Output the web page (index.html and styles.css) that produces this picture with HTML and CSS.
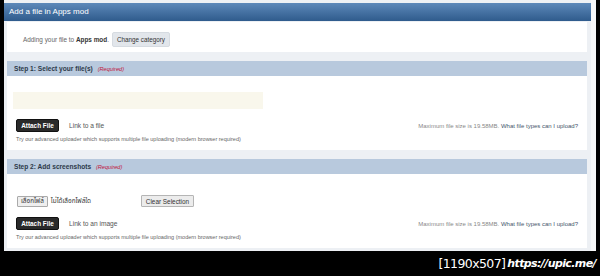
FILE: index.html
```html
<!DOCTYPE html>
<html lang="en">
<head>
  <meta charset="UTF-8">
  <title>Add a file in Apps mod</title>
  <link rel="stylesheet" href="styles.css">
</head>
<body>

  <!-- Capture d'écran : fenêtre + bord droit -->
  <div class="ecran">
    <div class="fenetre">

      <!-- Barre de titre bleue -->
      <div class="titre">Add a file in Apps mod</div>

      <div class="contenu">

        <!-- Catégorie choisie -->
        <div class="bloc categorie">
          <span class="texte-gris">Adding your file to <b>Apps mod</b>.</span>
          <button class="btn-gris">Change category</button>
        </div>

        <!-- Étape 1 -->
        <div class="bloc">
          <div class="etape-titre">Step 1: Select your file(s) <em>(Required)</em></div>
          <div class="etape-corps">
            <div class="champ"></div>
            <div class="ligne-envoi">
              <div class="gauche">
                <button class="btn-noir">Attach File</button>
                <a href="#">Link to a file</a>
              </div>
              <div class="droite">Maximum file size is 19.58MB. <a href="#">What file types can I upload?</a></div>
            </div>
            <p class="astuce">Try our advanced uploader which supports multiple file uploading (modern browser required)</p>
          </div>
        </div>

        <!-- Étape 2 -->
        <div class="bloc">
          <div class="etape-titre">Step 2: Add screenshots <em>(Required)</em></div>
          <div class="etape-corps corps-2">
            <div class="ligne-fichier">
              <button class="btn-fichier">เลือกไฟล์</button>
              <span class="aucun">ไม่ได้เลือกไฟล์ใด</span>
              <button class="btn-effacer">Clear Selection</button>
            </div>
            <div class="ligne-envoi">
              <div class="gauche">
                <button class="btn-noir">Attach File</button>
                <a href="#">Link to an image</a>
              </div>
              <div class="droite">Maximum file size is 19.58MB. <a href="#">What file types can I upload?</a></div>
            </div>
            <p class="astuce">Try our advanced uploader which supports multiple file uploading (modern browser required)</p>
          </div>
        </div>

      </div>
    </div>
    <div class="bord"></div>
  </div>

  <!-- Filigrane en bas -->
  <div class="filigrane">
    <span class="taille">[1190x507]</span><span class="site">https://upic.me/</span>
  </div>

</body>
</html>
```

FILE: styles.css
```css
/* Style de base : fond noir autour de la capture */
body {
  margin: 0;
  background: #000;
  font-family: "Liberation Sans", Arial, sans-serif;
  color: #333;
}

.ecran {
  display: flex;
  height: 251px;
  padding-left: 4px;
}

.fenetre {
  width: 587px;
  background: #edf0f4;
  border-top: 3px solid #eef1f4;
}

.bord {
  width: 5px;
  background: #f6f7f8;
}

/* Barre de titre */
.titre {
  height: 18px;
  line-height: 18px;
  padding-left: 5px;
  color: #fff;
  font-size: 8px;
  background: linear-gradient(#5d89b9, #2f5b8c);
}

.contenu {
  padding: 1px 4px 0 3px;
}

.bloc {
  background: #fff;
  margin-bottom: 9px;
}

/* Ligne de la catégorie */
.categorie {
  display: flex;
  align-items: center;
  gap: 3px;
  height: 30px;
  padding: 5px 0 0 16px;
  box-sizing: border-box;
}

.texte-gris {
  font-size: 6.4px;
  color: #666;
}

.texte-gris b {
  color: #333;
}

button {
  font-family: inherit;
  margin: 0;
  cursor: pointer;
}

.btn-gris {
  height: 15px;
  padding: 0 4px;
  font-size: 6.3px;
  color: #333;
  background: #e2e6eb;
  border: 1px solid #d6dbe1;
  border-radius: 2px;
}

/* Titre d'une étape */
.etape-titre {
  height: 15px;
  line-height: 15px;
  padding-left: 7px;
  font-size: 6.6px;
  font-weight: bold;
  color: #2d3a4a;
  background: #b8c9dd;
}

.etape-titre em {
  margin-left: 3px;
  font-size: 5.6px;
  font-weight: normal;
  color: #c0143c;
}

.etape-corps {
  padding: 16px 0 8px 0;
}

.corps-2 {
  padding-top: 21px;
}

/* Zone de dépôt crème */
.champ {
  width: 250px;
  height: 17px;
  margin-left: 6px;
  background: #f9f7ec;
}

.ligne-envoi {
  display: flex;
  justify-content: space-between;
  align-items: center;
  margin-top: 10px;
  padding: 0 9px;
}

.gauche {
  display: flex;
  align-items: center;
  gap: 10px;
}

.gauche a {
  font-size: 6.6px;
  color: #555;
  text-decoration: none;
}

.btn-noir {
  height: 13px;
  width: 43px;
  padding: 0;
  font-size: 6.4px;
  font-weight: bold;
  color: #fff;
  background: #2a2a2a;
  border: 1px solid #111;
  border-radius: 2px;
}

.droite {
  font-size: 6px;
  color: #888;
  margin-top: 1px;
}

.droite a {
  color: #45566b;
  text-decoration: none;
}

.astuce {
  margin: 4px 0 0 9px;
  font-size: 5.5px;
  color: #666;
}

/* Sélection de fichier (étape 2) */
.ligne-fichier {
  display: flex;
  align-items: center;
  padding-left: 10px;
  height: 12px;
}

.btn-fichier {
  height: 11px;
  padding: 0 3px;
  font-size: 6.4px;
  font-family: "Noto Sans Thai", "Noto Sans", sans-serif;
  line-height: 1;
  color: #333;
  background: #efefef;
  border: 1px solid #aaa;
  border-radius: 1px;
}

.aucun {
  margin-left: 3px;
  width: 90px;
  font-size: 6.4px;
  font-family: "Noto Sans Thai", "Noto Sans", sans-serif;
}

.btn-effacer {
  height: 12px;
  padding: 0 4px;
  font-size: 6.4px;
  color: #333;
  background: #ececec;
  border: 1px solid #b5b5b5;
  border-radius: 1px;
}

/* Filigrane */
.filigrane {
  display: flex;
  justify-content: flex-end;
  align-items: center;
  height: 25px;
  padding-right: 4px;
  color: #fff;
}

.taille {
  font-family: "DejaVu Sans", sans-serif;
  font-size: 12.5px;
  letter-spacing: -0.6px;
  margin-right: 2px;
}

.site {
  font-family: "DejaVu Sans", sans-serif;
  font-weight: bold;
  font-style: italic;
  font-size: 11px;
  letter-spacing: -0.6px;
}
```
